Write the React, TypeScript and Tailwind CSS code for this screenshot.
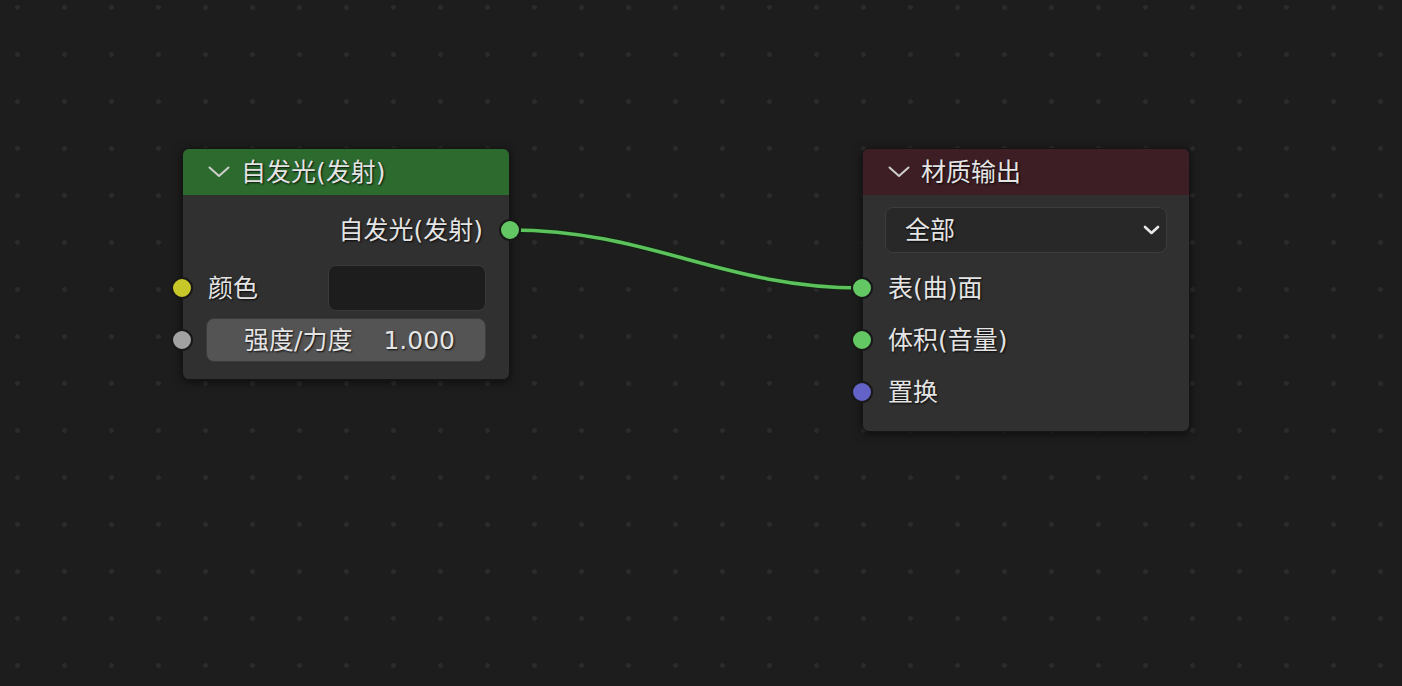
import React from 'react';

const font = '[font-family:"DejaVu_Sans","Noto_Sans_CJK_SC",sans-serif]';
const txt = 'text-[25px] leading-none text-[#e4e4e4] [text-shadow:1px_1px_2px_rgba(0,0,0,0.85)]';

const Socket: React.FC<{ color: string; side?: 'left' | 'right' }> = ({ color, side = 'left' }) => {
  return <span className={`absolute top-1/2 -translate-y-1/2 w-[22px] h-[22px] rounded-full border-[2px] border-[#181818] ${color} ${side === 'left' ? 'left-[-12px]' : 'right-[-12px]'}`} />;
};

const Chevron: React.FC = () => <svg width="22" height="12" viewBox="0 0 22 12" className="shrink-0">
    <polyline points="1.5,1.5 11,10 20.5,1.5" fill="none" stroke="#cfcfcf" strokeWidth="2" strokeLinecap="round" strokeLinejoin="round" />
  </svg>;

const App: React.FC = () => {
  return <div className={`relative w-full h-[686px] overflow-hidden bg-[#1d1d1d] bg-[radial-gradient(circle,#2b2b2b_2px,transparent_2.8px)] bg-[size:47px_47px] bg-[position:-6px_-16px] ${font}`}>
      {/* 连线 */}
      <svg className="absolute inset-0" width="1402" height="686">
        <path d="M510 230 C 650 230, 722 288, 862 288" fill="none" stroke="#142314" strokeWidth="6" />
        <path d="M510 230 C 650 230, 722 288, 862 288" fill="none" stroke="#5cc25c" strokeWidth="3.5" />
      </svg>

      {/* 自发光节点 */}
      <div className="absolute left-[182px] top-[148px] w-[328px] rounded-[7px] border border-[#151515] bg-[#303030] shadow-[0_2px_10px_rgba(0,0,0,0.55)]">
        <div className="flex items-center h-[46px] pl-[25px] gap-[11px] bg-[#2c6a2e] rounded-t-[6px]">
          <Chevron />
          <span className={txt}>自发光(发射)</span>
        </div>
        <div className="pt-[10px] pb-[17px]">
          <div className="relative flex items-center justify-end h-[50px] pr-[26px]">
            <span className={txt}>自发光(发射)</span>
            <Socket color="bg-[#63c763]" side="right" />
          </div>
          <div className="relative flex items-center h-[46px] mt-[10px] pl-[25px] pr-[23px]">
            <Socket color="bg-[#c7c729]" />
            <span className={txt}>颜色</span>
            <div className="ml-auto w-[158px] h-[46px] rounded-[8px] bg-[#1d1d1d] border border-[#3a3a3a]" />
          </div>
          <div className="relative flex items-center h-[44px] mt-[7px] px-[23px]">
            <Socket color="bg-[#a1a1a1]" />
            <div className="flex items-center justify-between w-full h-full rounded-[8px] bg-[#545454] border border-[#3b3b3b] pl-[37px] pr-[30px]">
              <span className={txt}>强度/力度</span>
              <span className={txt}>1.000</span>
            </div>
          </div>
        </div>
      </div>

      {/* 材质输出节点 */}
      <div className="absolute left-[862px] top-[148px] w-[328px] rounded-[7px] border border-[#151515] bg-[#303030] shadow-[0_2px_10px_rgba(0,0,0,0.55)]">
        <div className="flex items-center h-[46px] pl-[25px] gap-[11px] bg-[#3c1e24] rounded-t-[6px]">
          <Chevron />
          <span className={txt}>材质输出</span>
        </div>
        <div className="pt-[12px] pb-[13px]">
          <div className="px-[22px]">
            <div className="flex items-center justify-between h-[46px] rounded-[8px] bg-[#282828] border border-[#3c3c3c] pl-[19px] pr-[6px]">
              <span className={txt}>全部</span>
              <svg width="17" height="10" viewBox="0 0 17 10">
                <polyline points="2,2 8.5,8 15,2" fill="none" stroke="#e8e8e8" strokeWidth="2.6" strokeLinecap="round" strokeLinejoin="round" />
              </svg>
            </div>
          </div>
          <div className="mt-[9px]">
            {[{ label: '表(曲)面', color: 'bg-[#63c763]' }, { label: '体积(音量)', color: 'bg-[#63c763]' }, { label: '置换', color: 'bg-[#6363c7]' }].map(row => <div key={row.label} className="relative flex items-center h-[52px] pl-[25px]">
                <Socket color={row.color} />
                <span className={txt}>{row.label}</span>
              </div>)}
          </div>
        </div>
      </div>
    </div>;
};
export default App;
